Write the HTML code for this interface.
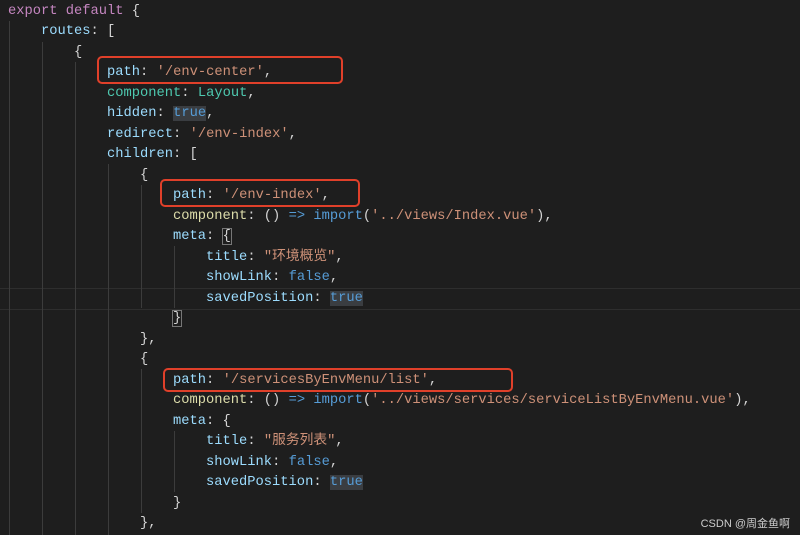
<!DOCTYPE html>
<html><head><meta charset="utf-8"><style>
html,body{margin:0;padding:0;background:#1e1e1e;width:800px;height:535px;overflow:hidden;}
#c{position:absolute;left:8px;top:2px;margin:0;font-family:"Liberation Mono","Noto Sans CJK SC",monospace;font-size:13.75px;line-height:20.48px;color:#d4d4d4;white-space:pre;}
.k{color:#c586c0}.p{color:#9cdcfe}.s{color:#ce9178}.g{color:#4ec9b0}.b{color:#569cd6}.f{color:#dcdcaa}
.t{background:#3a3d41}
.m{outline:1px solid #777;}
.v{position:absolute;width:1px;background:#3c3c3c}
.r{position:absolute;border:2px solid #e0402a;border-radius:5px;}
#cur{position:absolute;left:0;width:800px;top:288px;height:20px;border-top:1px solid #2e2e2e;border-bottom:1px solid #2e2e2e;}
#w{position:absolute;right:10px;top:515px;font-family:"Liberation Sans","Noto Sans CJK SC",sans-serif;font-size:11px;color:#ccc;}
</style></head><body>
<div id="cur"></div>
<div class="v" style="left:9px;top:21px;height:514px"></div>
<div class="v" style="left:42px;top:42px;height:493px"></div>
<div class="v" style="left:75px;top:62px;height:473px"></div>
<div class="v" style="left:108px;top:164px;height:371px"></div>
<div class="v" style="left:141px;top:185px;height:123px"></div>
<div class="v" style="left:141px;top:369px;height:144px"></div>
<div class="v" style="left:174px;top:246px;height:62px"></div>
<div class="v" style="left:174px;top:431px;height:61px"></div>
<pre id="c"><span class="k">export</span> <span class="k">default</span> {
    <span class="p">routes</span>: [
        {
            <span class="p">path</span>: <span class="s">'/env-center'</span>,
            <span class="g">component</span>: <span class="g">Layout</span>,
            <span class="p">hidden</span>: <span class="b t">true</span>,
            <span class="p">redirect</span>: <span class="s">'/env-index'</span>,
            <span class="p">children</span>: [
                {
                    <span class="p">path</span>: <span class="s">'/env-index'</span>,
                    <span class="f">component</span>: () <span class="b">=&gt;</span> <span class="b">import</span>(<span class="s">'../views/Index.vue'</span>),
                    <span class="p">meta</span>: <span class="m">{</span>
                        <span class="p">title</span>: <span class="s">"环境概览"</span>,
                        <span class="p">showLink</span>: <span class="b">false</span>,
                        <span class="p">savedPosition</span>: <span class="b t">true</span>
                    <span class="m">}</span>
                },
                {
                    <span class="p">path</span>: <span class="s">'/servicesByEnvMenu/list'</span>,
                    <span class="f">component</span>: () <span class="b">=&gt;</span> <span class="b">import</span>(<span class="s">'../views/services/serviceListByEnvMenu.vue'</span>),
                    <span class="p">meta</span>: {
                        <span class="p">title</span>: <span class="s">"服务列表"</span>,
                        <span class="p">showLink</span>: <span class="b">false</span>,
                        <span class="p">savedPosition</span>: <span class="b t">true</span>
                    }
                },</pre>
<div class="r" style="left:97px;top:56px;width:242px;height:24px"></div>
<div class="r" style="left:160px;top:179px;width:196px;height:24px"></div>
<div class="r" style="left:163px;top:368px;width:346px;height:20px"></div>
<div id="w">CSDN @周金鱼啊</div>
</body></html>
